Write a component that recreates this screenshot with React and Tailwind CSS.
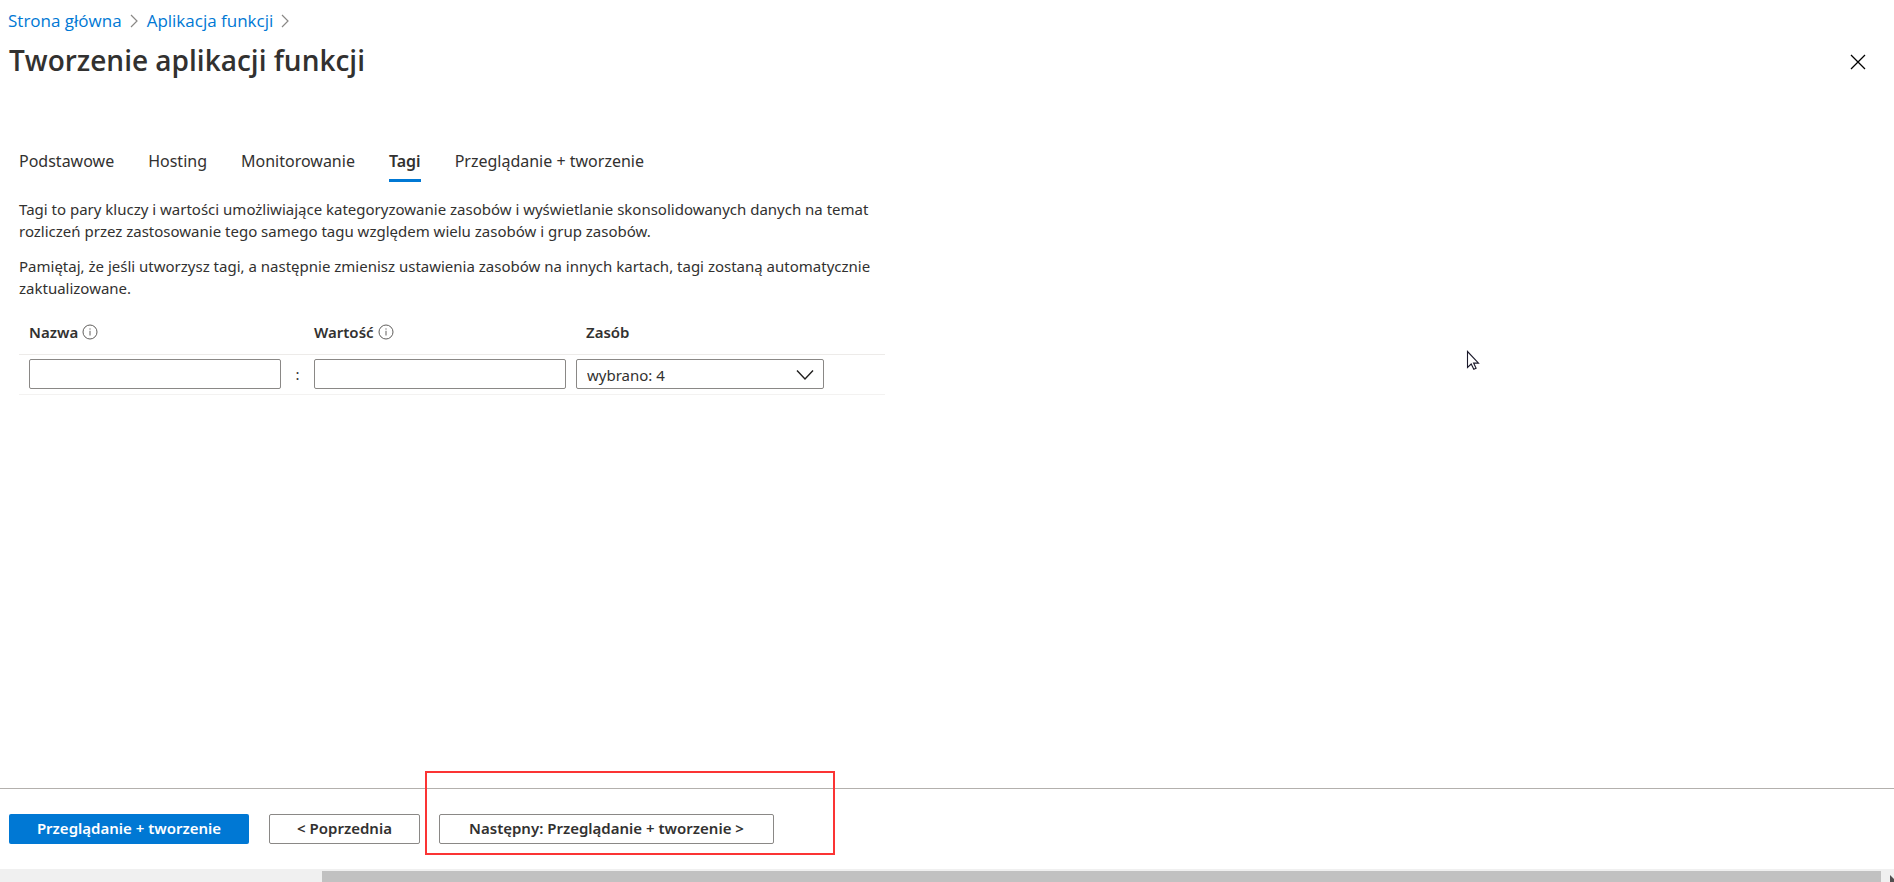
import React from "react";

const TABS = ["Podstawowe", "Hosting", "Monitorowanie", "Tagi", "Przeglądanie + tworzenie"];

function Crumb({ children }) {
  return (
    <li className="flex items-center gap-2">
      <a href="#" className="text-[#0078d4]">{children}</a>
      <svg width="9" height="14" viewBox="0 0 9 14" fill="none" stroke="#8a8886" strokeWidth="1.2" aria-hidden="true">
        <path d="M1 1l6 6-6 6" />
      </svg>
    </li>
  );
}

function InfoIcon() {
  return (
    <svg width="16" height="16" viewBox="0 0 16 16" fill="none" stroke="#605e5c" strokeWidth="1" aria-hidden="true">
      <circle cx="8" cy="8" r="7" />
      <path d="M8 6.8v4.7M8 4.4v1.2" />
    </svg>
  );
}

function SecondaryButton({ className, children }) {
  return (
    <button type="button" className={`h-[30px] rounded-xs border border-[#8a8886] bg-white pb-0.5 font-semibold ${className}`}>
      {children}
    </button>
  );
}

export default function App() {
  return (
    <div className="relative flex min-h-screen flex-col bg-white font-['Noto_Sans','Open_Sans',sans-serif] text-[15px] leading-[22px] text-[#323130]">
      <nav aria-label="Ścieżka nawigacji" className="px-2 pt-2 font-['Open_Sans','Noto_Sans',sans-serif]">
        <ol className="flex gap-2 text-[17px] leading-[26px]">
          <Crumb>Strona główna</Crumb>
          <Crumb>Aplikacja funkcji</Crumb>
        </ol>
      </nav>

      <header className="flex items-center justify-between pt-1.5 pr-7 pl-[9px] font-['Open_Sans','Noto_Sans',sans-serif]">
        <h1 className="text-[28px] leading-10 font-semibold">Tworzenie aplikacji funkcji</h1>
        <button type="button" aria-label="Zamknij" className="mt-1 flex size-4 items-center justify-center">
          <svg width="16" height="16" viewBox="0 0 16 16" fill="none" stroke="#000" strokeWidth="1.3">
            <path d="M1 1l14 14M15 1L1 15" />
          </svg>
        </button>
      </header>

      <main className="flex-1 px-[19px] pt-[69px]">
        <div role="tablist" className="flex gap-[34px] text-base leading-6">
          {TABS.map((tab) => (
            <button
              key={tab}
              type="button"
              role="tab"
              aria-selected={tab === "Tagi"}
              className={
                tab === "Tagi"
                  ? "border-b-3 border-[#0078d4] pb-1.5 font-semibold"
                  : "border-b-3 border-transparent pb-1.5"
              }
            >
              {tab}
            </button>
          ))}
        </div>

        <div className="mt-4 max-w-[866px]">
          <p>
            Tagi to pary kluczy i wartości umożliwiające kategoryzowanie zasobów i wyświetlanie skonsolidowanych danych na temat
            rozliczeń przez zastosowanie tego samego tagu względem wielu zasobów i grup zasobów.
          </p>
          <p className="mt-[13px]">
            Pamiętaj, że jeśli utworzysz tagi, a następnie zmienisz ustawienia zasobów na innych kartach, tagi zostaną automatycznie
            zaktualizowane.
          </p>

          <table className="mt-3 w-full table-fixed border-collapse text-left">
            <colgroup>
              <col className="w-[262px]" />
              <col className="w-[33px]" />
              <col className="w-[252px]" />
              <col />
            </colgroup>
            <thead>
              <tr className="h-[43px] border-b border-[#edebe9]">
                <th className="pl-[10px] font-semibold">
                  <label htmlFor="tag-name" className="flex items-center gap-1">Nazwa<InfoIcon /></label>
                </th>
                <th></th>
                <th className="font-semibold">
                  <label htmlFor="tag-value" className="flex items-center gap-1">Wartość<InfoIcon /></label>
                </th>
                <th className="pl-5 font-semibold">
                  <label htmlFor="tag-resource">Zasób</label>
                </th>
              </tr>
            </thead>
            <tbody>
              <tr className="h-10 border-b border-[#f3f2f1]">
                <td className="pl-[10px]">
                  <input id="tag-name" type="text" className="block h-[30px] w-full rounded-xs border border-[#8a8886] px-2" />
                </td>
                <td className="text-center">:</td>
                <td>
                  <input id="tag-value" type="text" className="block h-[30px] w-full rounded-xs border border-[#8a8886] px-2" />
                </td>
                <td className="pl-[10px]">
                  <div className="relative w-[248px]">
                    <select id="tag-resource" className="block h-[30px] w-full appearance-none rounded-xs border border-[#8a8886] bg-white pt-0.5 pl-[10px]">
                      <option>wybrano: 4</option>
                    </select>
                    <svg className="pointer-events-none absolute top-[10px] right-[10px]" width="18" height="12" viewBox="0 0 18 12" fill="none" stroke="#201f1e" strokeWidth="1.4" aria-hidden="true">
                      <path d="M1 1.5l8 8.5 8-8.5" />
                    </svg>
                  </div>
                </td>
              </tr>
            </tbody>
          </table>
        </div>
      </main>

      <footer className="border-t border-[#b3b0ad]">
        <div className="flex px-[9px] pt-[25px] pb-[25px]">
          <button type="button" className="h-[30px] min-w-60 rounded-xs bg-[#0078d4] px-6 pb-0.5 font-semibold text-white">
            Przeglądanie + tworzenie
          </button>
          <div className="ml-5 flex">
            <SecondaryButton className="min-w-[151px] px-6">&lt; Poprzednia</SecondaryButton>
          </div>
          <div className="relative ml-[19px] flex">
            <SecondaryButton className="min-w-[335px] px-6">Następny: Przeglądanie + tworzenie &gt;</SecondaryButton>
            <div className="pointer-events-none absolute -top-[43px] -right-[61px] -bottom-[11px] -left-[14px] border-2 border-[#fb3434]" />
          </div>
        </div>
        <div className="flex h-[13px] bg-[#f0f0f0] pt-0.5" aria-hidden="true">
          <div className="w-[17%]" />
          <div className="flex-1 bg-[#c1c1c1]" />
          <div className="flex w-[13px] justify-end">
            <svg width="4" height="11" viewBox="0 0 4 11" fill="#505050">
              <path d="M0 4l4 4v3H0z" />
            </svg>
          </div>
        </div>
      </footer>

      <svg className="pointer-events-none absolute top-[350px] left-[1466px]" width="14" height="21" viewBox="0 0 14 21" aria-hidden="true">
        <path d="M1.5 1.5v16l3.7-3.5 2.6 5.3 2.3-1.1-2.5-5.1h4.9z" fill="#fff" stroke="#1b1a2b" strokeWidth="1.1" />
      </svg>
    </div>
  );
}
